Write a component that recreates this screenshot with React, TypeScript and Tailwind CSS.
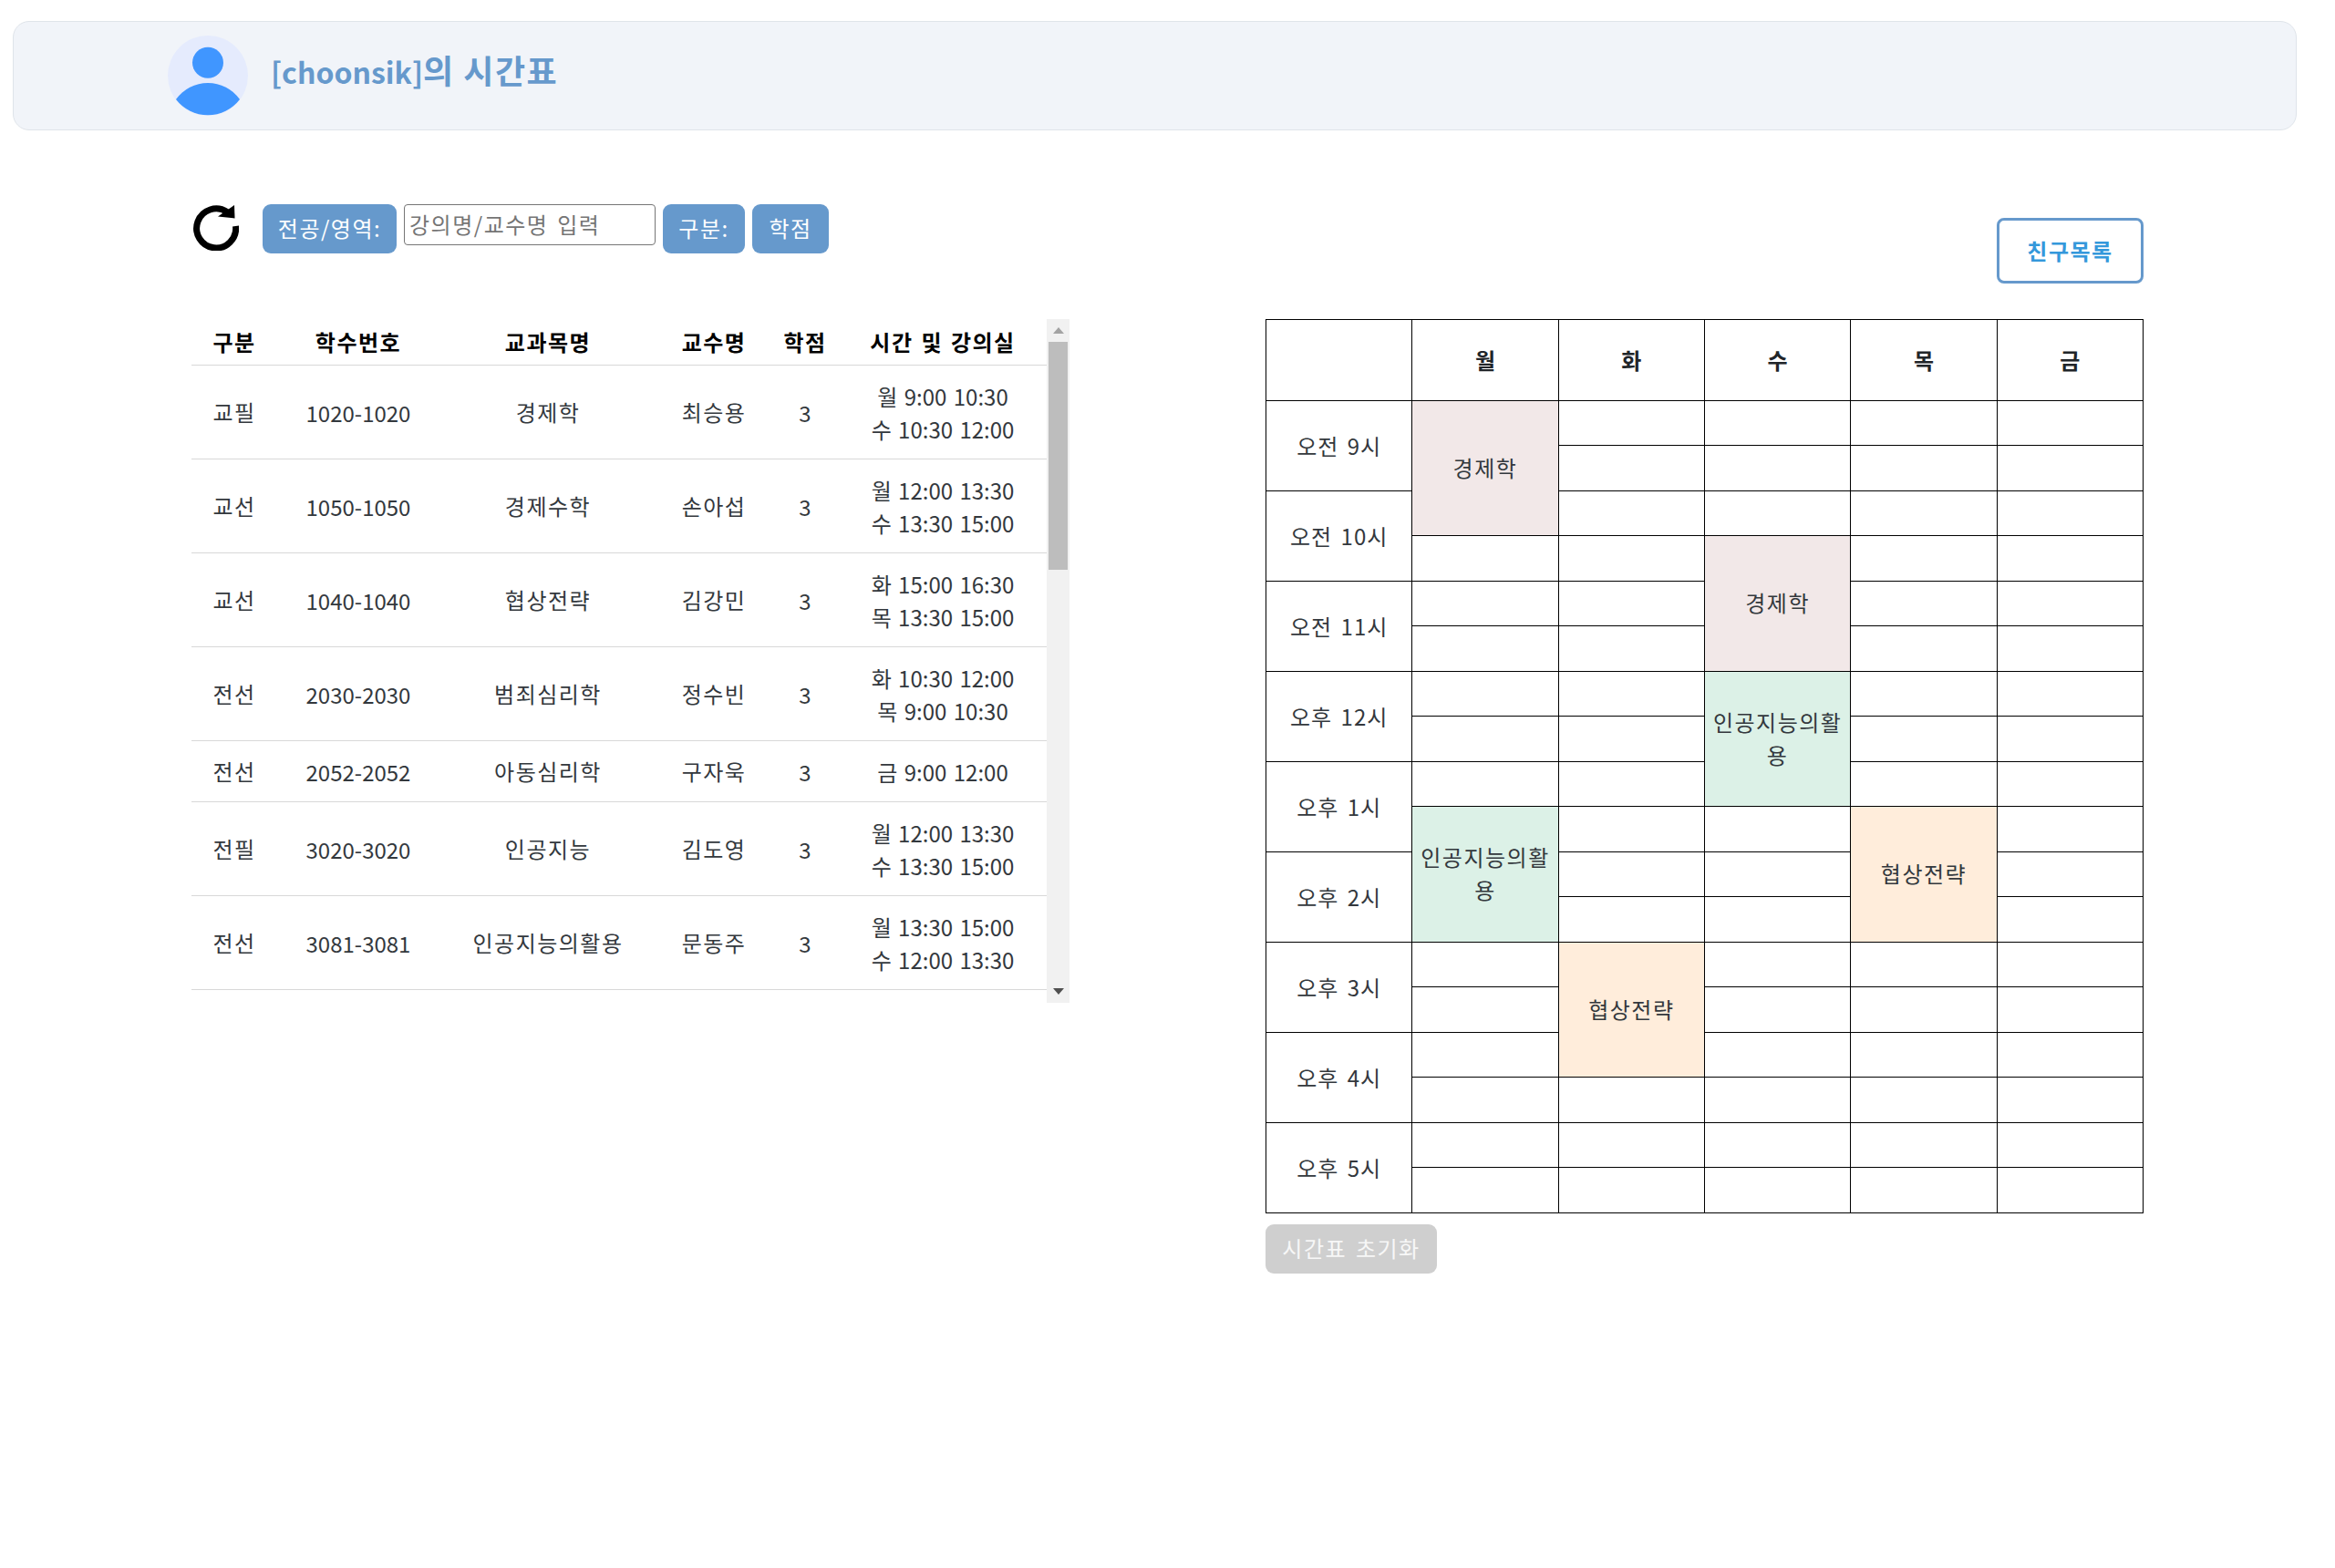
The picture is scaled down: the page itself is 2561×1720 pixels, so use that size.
import React from "react";

// course list on the left
const COURSES = [
  { kind: "교필", code: "1020-1020", name: "경제학", prof: "최승용", credit: 3, times: ["월 9:00 10:30", "수 10:30 12:00"] },
  { kind: "교선", code: "1050-1050", name: "경제수학", prof: "손아섭", credit: 3, times: ["월 12:00 13:30", "수 13:30 15:00"] },
  { kind: "교선", code: "1040-1040", name: "협상전략", prof: "김강민", credit: 3, times: ["화 15:00 16:30", "목 13:30 15:00"] },
  { kind: "전선", code: "2030-2030", name: "범죄심리학", prof: "정수빈", credit: 3, times: ["화 10:30 12:00", "목 9:00 10:30"] },
  { kind: "전선", code: "2052-2052", name: "아동심리학", prof: "구자욱", credit: 3, times: ["금 9:00 12:00"] },
  { kind: "전필", code: "3020-3020", name: "인공지능", prof: "김도영", credit: 3, times: ["월 12:00 13:30", "수 13:30 15:00"] },
  { kind: "전선", code: "3081-3081", name: "인공지능의활용", prof: "문동주", credit: 3, times: ["월 13:30 15:00", "수 12:00 13:30"] },
];

const DAYS = ["월", "화", "수", "목", "금"];
const HOURS = ["오전 9시", "오전 10시", "오전 11시", "오후 12시", "오후 1시", "오후 2시", "오후 3시", "오후 4시", "오후 5시"];

// start = half-hour slot counted from 9:00
const EVENTS = [
  { day: 0, start: 0, span: 3, label: "경제학", color: "bg-[#f2e8e8]" },
  { day: 2, start: 3, span: 3, label: "경제학", color: "bg-[#f2e8e8]" },
  { day: 2, start: 6, span: 3, label: "인공지능의활용", color: "bg-[#dcf1e7]" },
  { day: 0, start: 9, span: 3, label: "인공지능의활용", color: "bg-[#dcf1e7]" },
  { day: 3, start: 9, span: 3, label: "협상전략", color: "bg-[#ffeddb]" },
  { day: 1, start: 12, span: 3, label: "협상전략", color: "bg-[#ffeddb]" },
];

function Avatar() {
  return (
    <svg viewBox="0 0 88 88" className="h-[88px] w-[88px] shrink-0">
      <circle cx="44" cy="44" r="44" fill="#e5ebfd" />
      <circle cx="44" cy="29.7" r="17" fill="#4096ff" />
      <path d="M9 70 A43 43 0 0 1 79 70 A44 44 0 0 1 9 70 Z" fill="#4096ff" />
    </svg>
  );
}

function RefreshIcon() {
  return (
    <svg viewBox="0 0 50 50" className="h-[50px] w-[50px] shrink-0">
      <path d="M46.5 23 A21.5 21.5 0 1 1 37 7.5" fill="none" stroke="#000" strokeWidth="7" />
      <path d="M45 0 L45.5 14.5 L27 12.5 Z" fill="#000" />
    </svg>
  );
}

function FilterButton({ label, width }: { label: string; width: string }) {
  return (
    <button className={`h-[54px] ${width} shrink-0 rounded-[9px] bg-[#6699cc] pb-[2px] text-center tracking-[1.5px] text-white`}>
      {label}
    </button>
  );
}

function CourseTable() {
  return (
    <div className="flex h-[750px] w-full">
      <div className="w-[938px]">
        <table className="w-full table-fixed border-collapse text-center text-[#33383d]">
          <colgroup>
            <col className="w-[94px]" />
            <col className="w-[178px]" />
            <col className="w-[238px]" />
            <col className="w-[126px]" />
            <col className="w-[74px]" />
            <col />
          </colgroup>
          <thead>
            <tr className="h-[50px] border-b border-[#d8d8d8] font-bold tracking-[1.5px] text-black [word-spacing:2px]">
              <th>구분</th>
              <th>학수번호</th>
              <th>교과목명</th>
              <th>교수명</th>
              <th>학점</th>
              <th>시간 및 강의실</th>
            </tr>
          </thead>
          <tbody>
            {COURSES.map((c) => (
              <tr key={c.code} className={`${c.times.length > 1 ? "h-[103px]" : "h-[67px]"} border-b border-[#d8d8d8]`}>
                <td className="tracking-[1.5px]">{c.kind}</td>
                <td className="pt-[2px]">{c.code}</td>
                <td className="tracking-[1.5px]">{c.name}</td>
                <td className="tracking-[1.5px]">{c.prof}</td>
                <td className="pt-[2px]">{c.credit}</td>
                <td className="pt-[2px] [word-spacing:2px]">
                  {c.times.map((t) => (
                    <div key={t}>{t}</div>
                  ))}
                </td>
              </tr>
            ))}
          </tbody>
        </table>
      </div>
      {/* scrollbar */}
      <div className="flex w-[25px] flex-col items-center bg-[#f1f1f1]">
        <div className="flex h-[25px] items-center justify-center">
          <div className="h-0 w-0 border-x-[6px] border-b-[7px] border-x-transparent border-b-[#a3a3a3]" />
        </div>
        <div className="h-[250px] w-[21px] bg-[#bdbdbd]" />
        <div className="flex-1" />
        <div className="flex h-[25px] items-center justify-center">
          <div className="h-0 w-0 border-x-[6px] border-t-[7px] border-x-transparent border-t-[#505050]" />
        </div>
      </div>
    </div>
  );
}

function Timetable() {
  const slots = Array.from({ length: 18 }, (_, i) => i);
  const cell = "border border-black text-center";
  return (
    <table className="w-[963px] table-fixed border-collapse text-[#33383d]">
      <thead>
        <tr className="h-[89px]">
          <th className={cell} />
          {DAYS.map((d) => (
            <th key={d} className={`${cell} font-bold text-[#212529]`}>
              {d}
            </th>
          ))}
        </tr>
      </thead>
      <tbody>
        {slots.map((s) => (
          <tr key={s} className={s % 2 === 0 ? "h-[49px]" : "h-[50px]"}>
            {s % 2 === 0 && (
              <td rowSpan={2} className={`${cell} tracking-[1px] [word-spacing:3px]`}>
                {HOURS[s / 2]}
              </td>
            )}
            {DAYS.map((_, day) => {
              const ev = EVENTS.find((e) => e.day === day && s >= e.start && s < e.start + e.span);
              if (!ev) return <td key={day} className={cell} />;
              if (ev.start !== s) return null;
              return (
                <td key={day} rowSpan={ev.span} className={`${cell} ${ev.color} pb-[2px] tracking-[1.5px]`}>
                  {ev.label}
                </td>
              );
            })}
          </tr>
        ))}
      </tbody>
    </table>
  );
}

export default function App() {
  return (
    <div className="min-h-screen bg-white pt-[23px] text-[24px] leading-[36px] [font-family:'Noto_Sans_CJK_KR',sans-serif]">
      <header className="ml-[14px] mr-[42px] flex h-[120px] items-center gap-[25px] rounded-[18px] border border-[#dfe4ea] bg-[#f1f4f9] pl-[169px]">
        <Avatar />
        <h1 className="mb-[12px] text-[32px] font-bold text-[#6699cc]">
          [choonsik]<span className="text-[36px] tracking-[1.5px]">의 시간표</span>
        </h1>
      </header>

      <main className="mt-[81px] flex pl-[210px]">
        <section className="w-[963px]">
          <div className="flex h-[54px] items-start">
            <div className="ml-[2px] mt-[1px] mr-[26px]">
              <RefreshIcon />
            </div>
            <FilterButton label="전공/영역:" width="w-[147px]" />
            <input
              placeholder="강의명/교수명 입력"
              className="ml-[8px] h-[45px] w-[276px] rounded-[4px] border border-[#767676] px-[5px] pb-[2px] tracking-[1.5px] [word-spacing:3px] placeholder:text-[#757575]"
            />
            <div className="ml-[8px]">
              <FilterButton label="구분:" width="w-[90px]" />
            </div>
            <div className="ml-[8px]">
              <FilterButton label="학점" width="w-[84px]" />
            </div>
          </div>
          <div className="mt-[72px]">
            <CourseTable />
          </div>
        </section>

        <section className="ml-[215px] w-[963px]">
          <div className="flex h-[126px] items-start justify-end pt-[15px]">
            <button className="h-[72px] w-[161px] rounded-[8px] border-[3px] border-[#6699cc] bg-white pb-[1px] font-bold tracking-[1.5px] text-[#3498db]">
              친구목록
            </button>
          </div>
          <Timetable />
          <button className="mt-[12px] h-[54px] w-[188px] rounded-[9px] bg-[#cfcfcf] pb-[2px] text-center tracking-[1.5px] text-[#f7f7f7] [word-spacing:3px]">
            시간표 초기화
          </button>
        </section>
      </main>
    </div>
  );
}
